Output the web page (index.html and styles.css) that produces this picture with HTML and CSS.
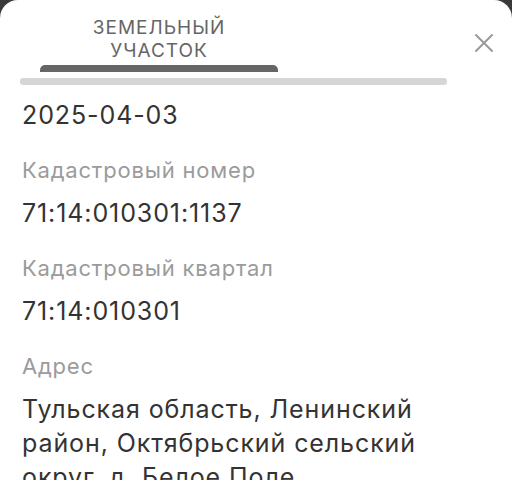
FILE: index.html
```html
<!DOCTYPE html>
<html lang="ru">
<head>
<meta charset="utf-8">
<link rel="stylesheet" href="styles.css">
</head>
<body>
<div class="sheet">
  <div class="header">
    <div class="tabs">
      <div class="tab">
        <div class="tab-title">ЗЕМЕЛЬНЫЙ<br>УЧАСТОК</div>
        <div class="tab-indicator"></div>
      </div>
      <div class="track"></div>
    </div>
    <div class="close">
      <svg width="20" height="20" viewBox="0 0 20 20"><path d="M2 2 L18 18 M18 2 L2 18" stroke="#9a9a9a" stroke-width="2" stroke-linecap="round" fill="none"/></svg>
    </div>
  </div>
  <div class="content">
    <div class="value first">2025-04-03</div>
    <div class="label">Кадастровый номер</div>
    <div class="value">71:14:010301:1137</div>
    <div class="label">Кадастровый квартал</div>
    <div class="value">71:14:010301</div>
    <div class="label">Адрес</div>
    <div class="value address">Тульская область, Ленинский район, Октябрьский сельский округ, д. Белое Поле</div>
  </div>
</div>
</body>
</html>
```
FILE: styles.css
```css
html, body {
  margin: 0;
  padding: 0;
  background: #3a3a3a;
  height: 100%;
  overflow: hidden;
}
.sheet {
  background: #fff;
  border-radius: 18px 18px 0 0;
  height: 100%;
  font-family: Inter, "Noto Sans", sans-serif;
}
.header {
  display: flex;
  align-items: flex-start;
  padding-top: 16px;
}
.tabs {
  margin-left: 20px;
  width: 427px;
}
.tab {
  margin-left: 20px;
  width: 238px;
  display: flex;
  flex-direction: column;
  align-items: center;
}
.tab-title {
  color: #666;
  font-size: 19px;
  line-height: 23px;
  text-align: center;
  letter-spacing: 1px;
  height: 49px;
}
.tab-indicator {
  width: 100%;
  height: 7px;
  background: #666;
  border-radius: 5px 5px 0 0;
}
.track {
  margin-top: 6px;
  height: 7px;
  background: #d6d6d6;
  border-radius: 3px;
}
.close {
  margin-left: 27px;
  margin-top: 17px;
  width: 20px;
  height: 20px;
}
.content {
  padding: 0 22px;
}
.label {
  color: #9b9b9b;
  font-size: 22px;
  line-height: 28px;
  letter-spacing: 0.8px;
  margin-top: 25px;
}
.value {
  color: #333;
  font-size: 25px;
  line-height: 32px;
  letter-spacing: 0.9px;
  margin-top: 13px;
}
.value.first {
  margin-top: 14px;
}
.address {
  width: 440px;
  line-height: 34px;
  margin-top: 12px;
}
```
